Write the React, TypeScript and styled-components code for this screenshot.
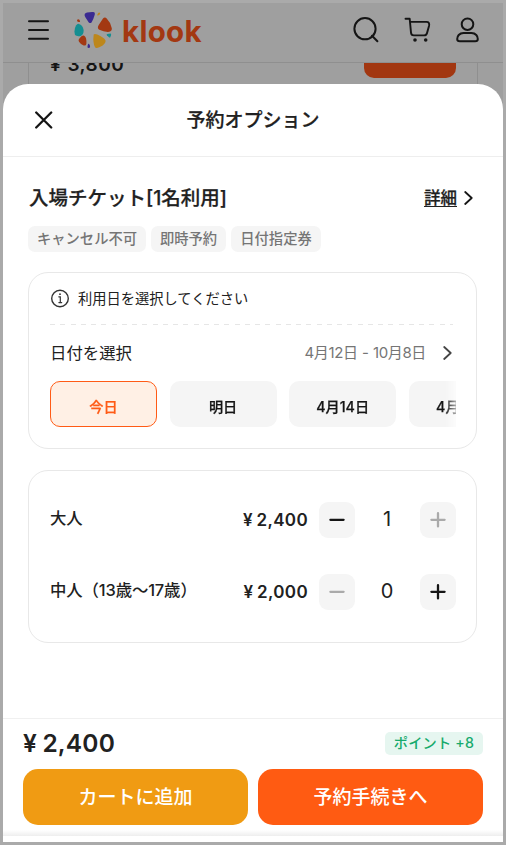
import React from "react";
import styled, { createGlobalStyle } from "styled-components";

const GlobalStyle = createGlobalStyle`
  *, *::before, *::after { box-sizing: border-box; }
  body { margin: 0; overflow: hidden; }
  button { font: inherit; padding: 0; border: 0; }
  svg { display: block; flex: none; }
`;

const Frame = styled.div`
  width: 506px;
  height: 845px;
  border: 3px solid #aaaaaa;
  background: #9f9f9f;
  display: flex;
  flex-direction: column;
  overflow: hidden;
  color: #212121;
  font-family: Inter, "Noto Sans CJK JP", sans-serif;
`;

const TopBar = styled.header`
  height: 60px;
  flex: none;
  display: flex;
  align-items: center;
  padding: 0 24px 5px 25px;
  border-bottom: 1px solid #8f8f8f;
`;

const Brand = styled.div`
  display: flex;
  align-items: center;
  margin-left: 25px;
  gap: 9px;
`;

const Wordmark = styled.span`
  font-size: 29.5px;
  line-height: 40px;
  font-weight: 700;
  letter-spacing: 0.3px;
  margin-top: 2px;
  color: #a33812;
`;

const TopActions = styled.nav`
  display: flex;
  align-items: center;
  gap: 25px;
  margin-left: auto;
`;

const Behind = styled.div`
  height: 22px;
  flex: none;
  margin: 0 25px;
  border: solid #8f8f8f;
  border-width: 0 1px;
  display: flex;
  justify-content: space-between;
  padding: 0 21px;
  overflow: hidden;
`;

const OldPrice = styled.span`
  font-size: 19px;
  font-weight: 600;
  line-height: 24px;
  margin-top: -10px;
  letter-spacing: 0.45px;
  word-spacing: 1px;
  color: #151515;
`;

const OldButton = styled.div`
  width: 92px;
  height: 15px;
  border-radius: 0 0 10px 10px;
  background: #a23711;
`;

const Sheet = styled.section`
  flex: 1;
  min-height: 0;
  margin-top: -1px;
  background: #fff;
  border-radius: 25px 25px 0 0;
  display: flex;
  flex-direction: column;
`;

const SheetHeader = styled.div`
  height: 73px;
  flex: none;
  display: grid;
  grid-template-columns: 40px 1fr 40px;
  align-items: center;
  padding: 0 31px;
  border-bottom: 1px solid #eeeeee;
`;

const Title = styled.h1`
  margin: 2px 0 0;
  text-align: center;
  font-size: 19px;
  font-weight: 500;
  line-height: 28px;
  -webkit-text-stroke: 0.25px;
`;

const Content = styled.main`
  flex: 1;
  min-height: 0;
  padding: 24px 26px 0 25px;
`;

const TicketRow = styled.div`
  display: flex;
  justify-content: space-between;
  align-items: center;
  height: 34px;
`;

const TicketName = styled.h2`
  margin: 0 0 0 1px;
  font-size: 19.5px;
  font-weight: 500;
  line-height: 34px;
  letter-spacing: 0;
  -webkit-text-stroke: 0.25px;
`;

const DetailLink = styled.span`
  display: flex;
  align-items: center;
  gap: 7px;
  font-size: 16.5px;
  font-weight: 500;
  line-height: 24px;
  padding: 0 4px 0 0;
  -webkit-text-stroke: 0.25px;
`;

const Underlined = styled.span`
  text-decoration: underline;
  text-decoration-thickness: 1px;
  text-underline-offset: 2px;
`;

const Chips = styled.div`
  display: flex;
  gap: 5px;
  margin-top: 11px;
`;

const Chip = styled.span<{ $w: number }>`
  width: ${(p) => p.$w}px;
  height: 26px;
  border-radius: 7px;
  background: #f5f5f5;
  color: #757575;
  text-align: center;
  font-size: 14.3px;
  font-weight: 500;
  line-height: 25px;
  white-space: nowrap;
`;

const Card = styled.section<{ $h: number; $top: number }>`
  height: ${(p) => p.$h}px;
  margin-top: ${(p) => p.$top}px;
  border: 1.5px solid #e8e8e8;
  border-radius: 20px;
  padding: 0 20px 0 21px;
`;

const Notice = styled.div`
  display: flex;
  align-items: center;
  gap: 9px;
  height: 51px;
  font-size: 14.25px;
  line-height: 20px;
`;

const Dash = styled.div`
  height: 1px;
  width: 403px;
  background: repeating-linear-gradient(90deg, #e6e6e6 0 5px, transparent 5px 10.25px);
`;

const DateRow = styled.div`
  display: flex;
  align-items: center;
  height: 56px;
  padding-right: 4px;
  font-size: 16.4px;
  line-height: 24px;
`;

const DateRange = styled.span`
  margin: 0 17px 0 auto;
  color: #757575;
  font-size: 15px;
  letter-spacing: -0.35px;
  word-spacing: 0.5px;
`;

const DateViewport = styled.div`
  display: flex;
  gap: 12.6px;
  width: 406px;
  overflow: hidden;
  mask-image: linear-gradient(90deg, #000 0 395px, rgba(0, 0, 0, 0.35) 406px);
`;

const DateOption = styled.button<{ $active?: boolean }>`
  flex: 0 0 107px;
  height: 46px;
  border-radius: 10px;
  border: ${(p) => (p.$active ? "1.5px solid #ff5b16" : "0")};
  background: ${(p) => (p.$active ? "#fff0e5" : "#f5f5f5")};
  color: ${(p) => (p.$active ? "#ff5b16" : "#151515")};
  font-size: 14.2px;
  font-weight: 500;
  line-height: 20px;
  padding-top: 5px;
  -webkit-text-stroke: 0.25px;
`;

const GuestRow = styled.div`
  display: flex;
  align-items: center;
  height: 36px;
  margin-bottom: 36px;
`;

const GuestName = styled.span`
  font-size: 16.4px;
  font-weight: 500;
  line-height: 24px;
  margin-top: -5px;
  letter-spacing: -0.12px;
`;

const GuestPrice = styled.span`
  margin: -1px 11px 0 auto;
  font-size: 17px;
  font-weight: 600;
  line-height: 24px;
  letter-spacing: 0.35px;
  word-spacing: -1px;
`;

const Stepper = styled.div`
  display: grid;
  grid-template-columns: 36px 65px 36px;
  align-items: center;
  justify-items: center;
`;

const StepButton = styled.button<{ $off?: boolean }>`
  width: 36px;
  height: 36px;
  border-radius: 9px;
  background: #f5f5f5;
  color: ${(p) => (p.$off ? "#aaaaaa" : "#151515")};
  display: grid;
  place-items: center;
`;

const Count = styled.span`
  font-size: 20px;
  font-weight: 400;
  line-height: 28px;
  margin: -2px 1px 0 0;
`;

const Footer = styled.footer`
  height: 118px;
  flex: none;
  border-top: 1.5px solid #f0f0f0;
  padding: 9px 20px 0;
  background: linear-gradient(180deg, #fff 0 111px, #eeeeee 117px);
`;

const TotalRow = styled.div`
  display: flex;
  justify-content: space-between;
  align-items: center;
  height: 30px;
`;

const Total = styled.strong`
  font-size: 24.5px;
  font-weight: 600;
  line-height: 30px;
  letter-spacing: 0.2px;
  word-spacing: -1px;
`;

const Points = styled.span`
  width: 98px;
  height: 23px;
  border-radius: 5px;
  background: #e6f6f0;
  color: #16aa6c;
  text-align: center;
  font-size: 14.2px;
  font-weight: 500;
  line-height: 22px;
  letter-spacing: 0.2px;
  white-space: nowrap;
`;

const Actions = styled.div`
  display: grid;
  grid-template-columns: 1fr 1fr;
  gap: 10px;
  margin-top: 11px;
`;

const ActionButton = styled.button<{ $color: string }>`
  height: 56px;
  border-radius: 15px;
  background: ${(p) => p.$color};
  color: #fff;
  font-size: 19px;
  font-weight: 500;
  line-height: 28px;
  padding-top: 1px;
`;

const BottomEdge = styled.div`
  height: 6px;
  flex: none;
  background: #fff;
`;

const MenuIcon = () => (
  <svg width="21" height="22" viewBox="0 0 21 22" fill="none" stroke="#151515" strokeWidth="2" strokeLinecap="round">
    <path d="M1 2.3h19M1 11h19M1 19.7h19" />
  </svg>
);

const Logo = () => (
  <svg width="39" height="38" viewBox="0 0 39 38">
    <path d="M10.7 3.1Q11 2 13 1.5Q17 .7 19.4 1Q21.5 1.4 20.8 3.6Q19.5 8.5 17.5 11.4Q16.3 12.8 14.8 11.4L11.5 6.6Q10.2 4.7 10.7 3.1Z" fill="#3a2a91" />
    <path d="M23.4 3.4Q24.6.7 25.8 1.7Q27.1 2.8 25.2 4L23.9 4.5Q22.8 4.8 23.4 3.4Z" fill="#bd871c" />
    <path d="M29 7.5Q31 5.7 32.7 7.6Q36.5 11.3 37.8 17.3Q38.2 20.2 35.3 20.8Q30.5 21.3 25.3 18.8Q22.8 17.2 24.7 14Z" fill="#a33812" />
    <path d="M33.4 23L36.3 22.6Q37.6 22.5 37 24.3L36.4 26Q35.9 27 34.7 26L32.9 24.3Q32 23.2 33.4 23Z" fill="#158e91" />
    <path d="M19.7 23.6Q20.6 22.3 23.3 23.6Q30 26.8 31.4 29.2Q32.4 31.7 28.7 34.6Q23 38.2 21.3 36.4Q19.7 34.4 19.3 28.4Z" fill="#bd871c" />
    <path d="M14.8 32.8Q15.8 33.5 16.1 35.3Q16.4 37 14.8 37.1Q13.2 37 13.5 35.2Q13.9 32.2 14.8 32.8Z" fill="#3a2a91" />
    <path d="M5 28.1Q8.3 23.8 10.2 24.8Q12.7 26 12.4 32.7Q12.1 35.1 9.7 34.5Q6.6 33.4 5 30.8Q4.1 29.3 5 28.1Z" fill="#a33812" />
    <path d="M4.9 12.9Q8.8 13.7 9.6 19Q9.8 23.9 6.8 24.9Q2.8 25.7 1 24Q-.4 18.8 2 14.6Q3.2 12.6 4.9 12.9Z" fill="#158e91" />
    <path d="M4.3 8.2Q5.8 8.3 6 10.2Q6 11.4 4.7 10.9Q2.9 10.4 3 9.4Q3.3 8.2 4.3 8.2Z" fill="#a33812" />
  </svg>
);

const SearchIcon = () => (
  <svg width="26" height="26" viewBox="0 0 26 26" fill="none" stroke="#151515" strokeWidth="2" strokeLinecap="round">
    <circle cx="12" cy="11.7" r="10.6" />
    <path d="M19 18.7l5.4 5.5" />
  </svg>
);

const CartIcon = () => (
  <svg width="27" height="26" viewBox="0 0 27 26" fill="none" stroke="#151515" strokeWidth="1.9" strokeLinecap="round" strokeLinejoin="round">
    <path d="M1.5 1.8h4.2L7 15.7Q7.2 18.4 9.8 18.4h10.3Q22.3 18.4 23 16.1L25 9Q26 4.9 22.5 4.9H6.1" />
    <circle cx="11" cy="23" r="1.8" fill="#151515" stroke="none" />
    <circle cx="21.7" cy="23" r="1.8" fill="#151515" stroke="none" />
  </svg>
);

const UserIcon = () => (
  <svg width="23" height="26" viewBox="0 0 23 26" fill="none" stroke="#151515" strokeWidth="2">
    <circle cx="11.5" cy="7.2" r="5.8" />
    <path d="M7.5 15.9h8Q18.4 15.9 20.3 18Q21.8 19.7 21.8 22Q21.8 24.2 19.2 24.2H3.8Q1.2 24.2 1.2 22Q1.2 19.7 2.7 18Q4.6 15.9 7.5 15.9Z" />
  </svg>
);

const CloseIcon = () => (
  <svg width="19" height="19" viewBox="0 0 19 19" fill="none" stroke="#151515" strokeWidth="2.3" strokeLinecap="round">
    <path d="M2.2 1.5l15 15M17.2 1.5L2.2 16.5" />
  </svg>
);

const ChevronIcon = ({ size = 14, color = "#151515" }: { size?: number; color?: string }) => (
  <svg width={(size * 9) / 14} height={size} viewBox="0 0 9 14" fill="none" stroke={color} strokeWidth="1.8" strokeLinecap="round" strokeLinejoin="round">
    <path d="M1.2 1l6.5 6-6.5 6" />
  </svg>
);

const InfoIcon = () => (
  <svg width="19" height="19" viewBox="0 0 19 19" fill="none" stroke="#333" strokeWidth="1.4" strokeLinecap="round">
    <circle cx="10" cy="9.5" r="8.3" />
    <path d="M8.8 7.8h1.5v5.6M8.9 13.6h2.8" strokeWidth="1.2" />
    <circle cx="10" cy="5.2" r="0.9" fill="#333" stroke="none" />
  </svg>
);

const StepIcon = ({ plus }: { plus?: boolean }) => (
  <svg width="16" height="16" viewBox="0 0 16 16" fill="none" stroke="currentColor" strokeWidth="2.3" strokeLinecap="round">
    <path d={plus ? "M1.4 7.8h13.2M8 1.2v13.2" : "M1.4 7.8h13.2"} />
  </svg>
);

const guests = [
  { name: "大人", price: "¥ 2,400", count: 1, minusOff: false, plusOff: true },
  { name: "中人（13歳〜17歳）", price: "¥ 2,000", count: 0, minusOff: true, plusOff: false },
];

const GuestList = styled.div`
  padding-top: 31px;
`;

export default function App() {
  return (
    <>
      <GlobalStyle />
      <Frame lang="ja">
        <TopBar>
          <MenuIcon />
          <Brand>
            <Logo />
            <Wordmark>klook</Wordmark>
          </Brand>
          <TopActions>
            <SearchIcon />
            <CartIcon />
            <UserIcon />
          </TopActions>
        </TopBar>
        <Behind>
          <OldPrice>¥ 3,800</OldPrice>
          <OldButton />
        </Behind>
        <Sheet>
          <SheetHeader>
            <CloseIcon />
            <Title>予約オプション</Title>
          </SheetHeader>
          <Content>
            <TicketRow>
              <TicketName>入場チケット[1名利用]</TicketName>
              <DetailLink>
                <Underlined>詳細</Underlined>
                <ChevronIcon />
              </DetailLink>
            </TicketRow>
            <Chips>
              <Chip $w={118}>キャンセル不可</Chip>
              <Chip $w={75}>即時予約</Chip>
              <Chip $w={90}>日付指定券</Chip>
            </Chips>
            <Card $h={177} $top={20}>
              <Notice>
                <InfoIcon />
                利用日を選択してください
              </Notice>
              <Dash />
              <DateRow>
                日付を選択
                <DateRange>4月12日 - 10月8日</DateRange>
                <ChevronIcon color="#444" />
              </DateRow>
              <DateViewport>
                <DateOption $active>今日</DateOption>
                <DateOption>明日</DateOption>
                <DateOption>4月14日</DateOption>
                <DateOption>4月15日</DateOption>
              </DateViewport>
            </Card>
            <Card $h={173} $top={21}>
              <GuestList>
                {guests.map((g) => (
                  <GuestRow key={g.name}>
                    <GuestName>{g.name}</GuestName>
                    <GuestPrice>{g.price}</GuestPrice>
                    <Stepper>
                      <StepButton $off={g.minusOff} aria-label="減らす">
                        <StepIcon />
                      </StepButton>
                      <Count>{g.count}</Count>
                      <StepButton $off={g.plusOff} aria-label="増やす">
                        <StepIcon plus />
                      </StepButton>
                    </Stepper>
                  </GuestRow>
                ))}
              </GuestList>
            </Card>
          </Content>
          <Footer>
            <TotalRow>
              <Total>¥ 2,400</Total>
              <Points>ポイント +8</Points>
            </TotalRow>
            <Actions>
              <ActionButton $color="#f09b13">カートに追加</ActionButton>
              <ActionButton $color="#ff5b12">予約手続きへ</ActionButton>
            </Actions>
          </Footer>
          <BottomEdge />
        </Sheet>
      </Frame>
    </>
  );
}
